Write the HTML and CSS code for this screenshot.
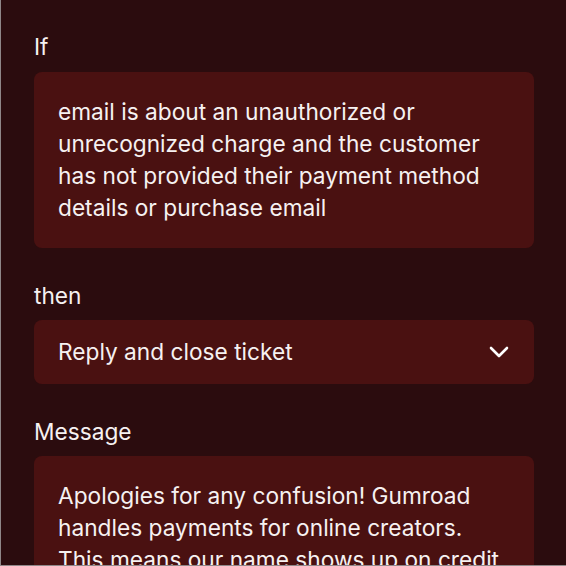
FILE: index.html
```html
<!DOCTYPE html>
<html>
<head>
<meta charset="utf-8">
<link rel="stylesheet" href="styles.css">
</head>
<body>
<div class="card">
  <div class="field">
    <div class="label">If</div>
    <div class="box">email is about an unauthorized or unrecognized charge and the customer has not provided their payment method details or purchase email</div>
  </div>
  <div class="field">
    <div class="label">then</div>
    <div class="select">
      <span>Reply and close ticket</span>
      <svg class="chevron" width="20" height="12" viewBox="0 0 20 12"><path d="M2 2 L10 10 L18 2" fill="none" stroke="#ffffff" stroke-width="2.6" stroke-linecap="round" stroke-linejoin="round"/></svg>
    </div>
  </div>
  <div class="field">
    <div class="label">Message</div>
    <div class="box">Apologies for any confusion! Gumroad handles payments for online creators. This means our name shows up on credit card statements for purchases from many different creators.</div>
  </div>
</div>
</body>
</html>
```
FILE: styles.css
```css
html, body {
  margin: 0;
  padding: 0;
  background: #2b0c0e;
}
.card {
  box-sizing: border-box;
  width: 566px;
  height: 566px;
  overflow: hidden;
  border-left: 1px solid #8f8788;
  border-bottom: 1px solid #8f8788;
  padding: 31px 32px 0 33px;
  display: flex;
  flex-direction: column;
  gap: 32px;
  font-family: Inter, "Noto Sans", sans-serif;
  font-size: 22.7px;
  line-height: 32px;
  color: #f6f1f1;
}
.field {
  display: flex;
  flex-direction: column;
  gap: 8px;
}
.field:first-child .label {
  margin-bottom: 1px;
}
.box {
  background: #4a1111;
  border-radius: 8px;
  padding: 24px;
}
.select {
  background: #4a1111;
  border-radius: 8px;
  padding: 16px 25px 16px 24px;
  display: flex;
  align-items: center;
  justify-content: space-between;
}
.chevron {
  display: block;
}
```
